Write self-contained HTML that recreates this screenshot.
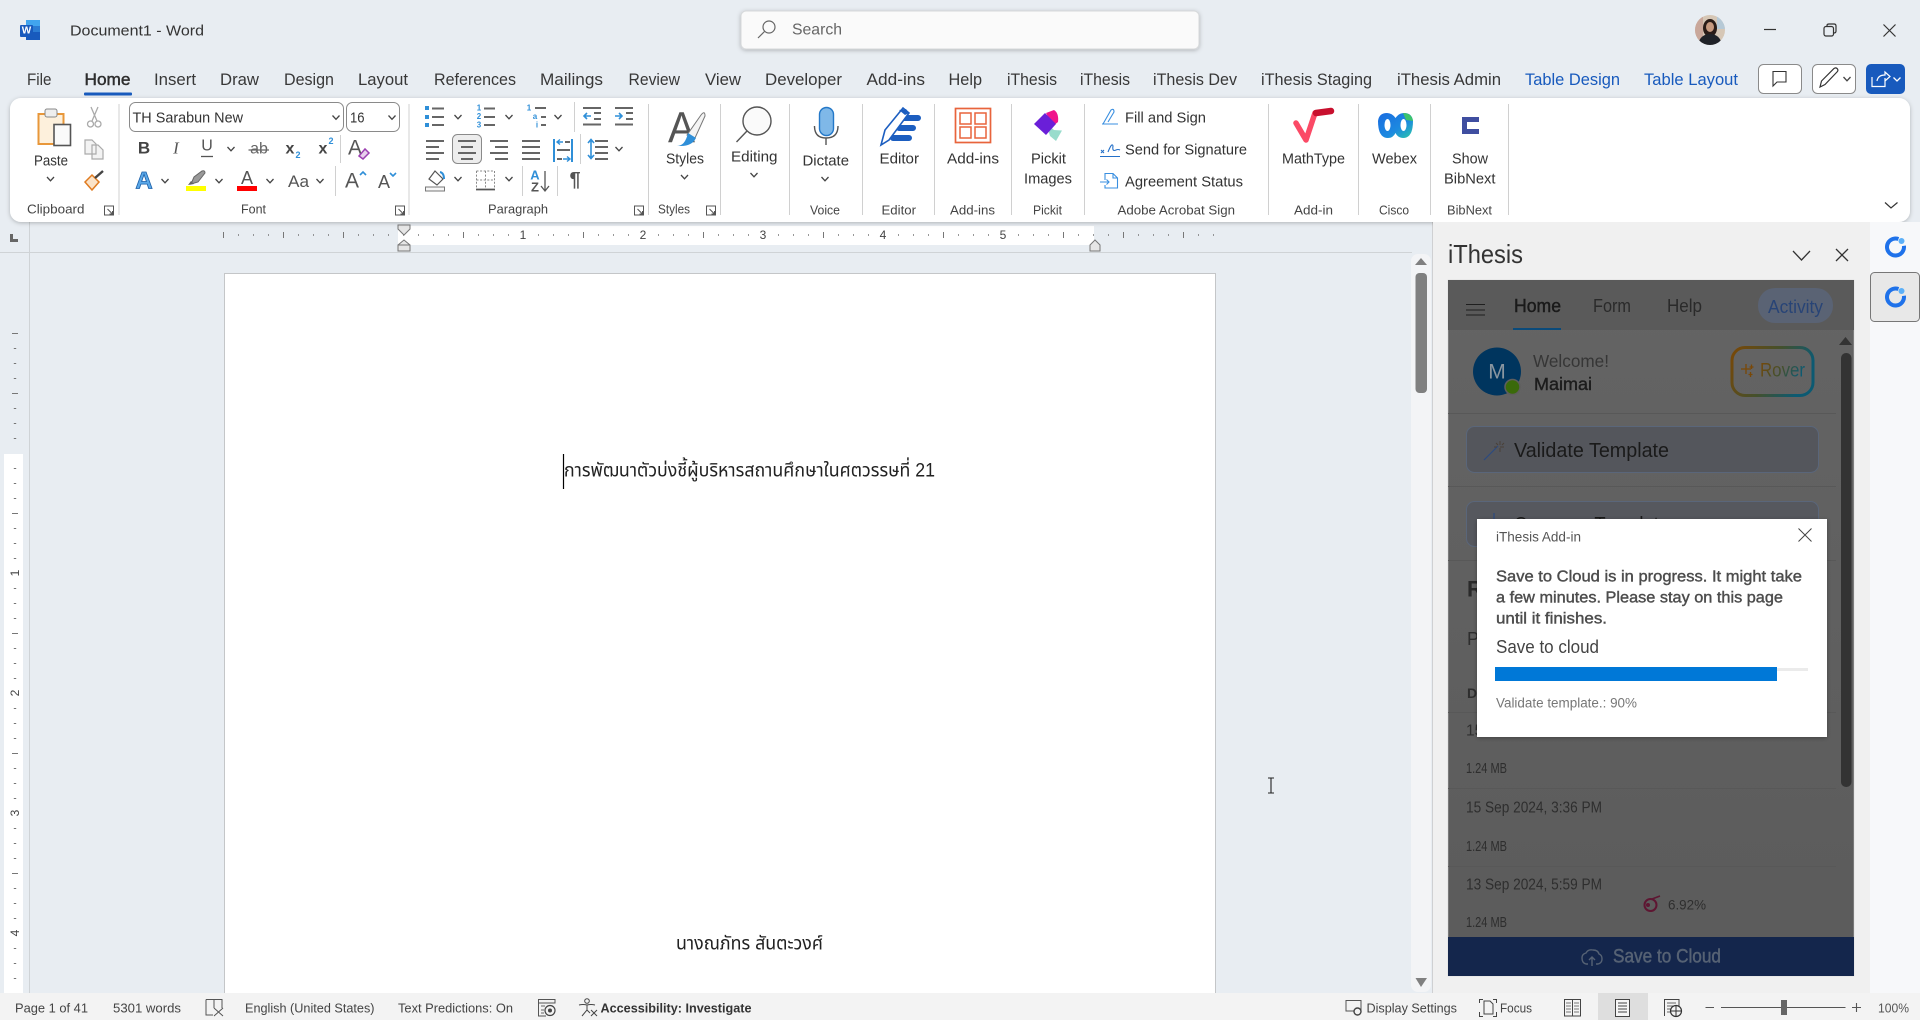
<!DOCTYPE html>
<html lang="en"><head><meta charset="utf-8"><title>Document1 - Word</title>
<style>
html,body{margin:0;padding:0;width:1920px;height:1020px;overflow:hidden;background:#e8edf2}
svg{display:block}
text{font-family:"Liberation Sans","Noto Sans CJK JP",sans-serif;dominant-baseline:central;fill:#333}
.tab{font-size:16.5px;fill:#383838}
.rb{font-size:15px;fill:#333}
.lb{font-size:13px;fill:#444}
.sb{font-size:13px;fill:#444}
.ln{fill:none;stroke:#666;stroke-width:2}
.bl{fill:none;stroke:#2f8fd8;stroke-width:2}
.sep{stroke:#d0d0d0;stroke-width:1}
.ic{fill:none;stroke:#666;stroke-width:1.3}
.dk{font-size:15.5px;fill:#2e2e2e}
.sm{font-size:14.5px;fill:#2e2e2e}
.pl{stroke:#585858;stroke-width:1}
.pop{font-size:15.5px;fill:#4c4c4c;stroke:#4c4c4c;stroke-width:.4}
</style></head><body>
<svg width="1920" height="1020" viewBox="0 0 1920 1020" xmlns="http://www.w3.org/2000/svg">
<defs>
<g id="ch"><path d="M-3.5 -2L0 1.8L3.5 -2" fill="none" stroke="#444" stroke-width="1.3"/></g>
<g id="lc"><path d="M0 0H9V9H0Z M3 3L8 8M8 5V8H5" fill="none" stroke="#555" stroke-width="1"/></g>
<g id="sw"><circle r="8.5" fill="none" stroke="#1f72ea" stroke-width="4" stroke-dasharray="44 9.4" transform="rotate(-8)"/><circle cx="6" cy="-6" r="3" fill="#5cb0f8"/></g>
<filter id="sh" x="-2%" y="-10%" width="104%" height="125%"><feDropShadow dx="0" dy="1" stdDeviation="2" flood-color="#000" flood-opacity=".25"/></filter>
<filter id="sh2" x="-5%" y="-5%" width="110%" height="110%"><feDropShadow dx="0" dy="1" stdDeviation="2" flood-color="#000" flood-opacity=".3"/></filter>
<linearGradient id="rov" x1="0" x2="1" y1="0" y2="0.3"><stop offset="0" stop-color="#7a4806"/><stop offset=".55" stop-color="#44502c"/><stop offset="1" stop-color="#0c5a72"/></linearGradient>
<linearGradient id="wbx" x1="0" x2="1" y1="0" y2="1"><stop offset="0" stop-color="#1a6be0"/><stop offset=".6" stop-color="#1c8ae0"/><stop offset="1" stop-color="#2cc8a8"/></linearGradient>
<linearGradient id="pb" x1="0" x2="0" y1="0" y2="1"><stop offset="0" stop-color="#646464"/><stop offset="1" stop-color="#5b5b5b"/></linearGradient>
<clipPath id="av"><circle cx="1710" cy="30" r="15"/></clipPath>
</defs>

<rect width="1920" height="1020" fill="#e8edf2"/>

<!-- Title bar -->
<rect x="26" y="20" width="14" height="20" rx="1.5" fill="#2b7cd3"/><rect x="26" y="20" width="14" height="6" fill="#41a5ee"/><rect x="26" y="32" width="14" height="8" fill="#185abd"/><rect x="20" y="25" width="13" height="12" rx="1" fill="#185abd"/>
<text x="26.5" y="31" style="font-size:10px;font-weight:bold;fill:#fff;text-anchor:middle">W</text>
<text x="70" y="31" textLength="134" lengthAdjust="spacingAndGlyphs" style="font-size:15px;fill:#333">Document1  -  Word</text>
<rect x="741" y="11" width="458" height="38" rx="5" fill="#fafafa" stroke="#d6d8da" filter="url(#sh)"/>
<circle cx="769" cy="27" r="6" fill="none" stroke="#666" stroke-width="1.2"/><path d="M764.5 31.5L758 38" stroke="#666" stroke-width="1.2"/>
<text x="792" y="30" textLength="50" lengthAdjust="spacingAndGlyphs" style="font-size:16px;fill:#666">Search</text>
<g clip-path="url(#av)"><rect x="1695" y="15" width="30" height="30" fill="#d6c7b6"/><rect x="1695" y="15" width="8" height="30" fill="#c9a79a"/><rect x="1717" y="15" width="8" height="14" fill="#b6c9d6"/><ellipse cx="1710" cy="28" rx="7" ry="9" fill="#2a1c18"/><ellipse cx="1710" cy="27" rx="4" ry="5" fill="#c79a80"/><ellipse cx="1710" cy="43" rx="11" ry="9" fill="#1f2228"/></g>
<path d="M1764 29.5H1776" stroke="#333" stroke-width="1.2"/>
<rect x="1824" y="26.5" width="9.5" height="9.5" rx="2" fill="none" stroke="#333" stroke-width="1.2"/><path d="M1827 26V25.5Q1827 24 1829 24H1834Q1836 24 1836 26V31Q1836 33 1834 33" fill="none" stroke="#333" stroke-width="1.2"/>
<path d="M1883.5 24.5L1895.5 36.5M1895.5 24.5L1883.5 36.5" stroke="#333" stroke-width="1.2"/>

<!-- Tabs -->
<text class="tab" x="27" y="80" textLength="24.5" lengthAdjust="spacingAndGlyphs">File</text>
<text class="tab" x="84.5" y="80" textLength="46" lengthAdjust="spacingAndGlyphs" style="fill:#2e2e2e;stroke:#2e2e2e;stroke-width:.45">Home</text>
<rect x="84" y="92.5" width="48" height="3" rx="1" fill="#185abd"/>
<text class="tab" x="154" y="80" textLength="42" lengthAdjust="spacingAndGlyphs">Insert</text>
<text class="tab" x="220" y="80" textLength="39" lengthAdjust="spacingAndGlyphs">Draw</text>
<text class="tab" x="284" y="80" textLength="50" lengthAdjust="spacingAndGlyphs">Design</text>
<text class="tab" x="358" y="80" textLength="50" lengthAdjust="spacingAndGlyphs">Layout</text>
<text class="tab" x="434" y="80" textLength="82" lengthAdjust="spacingAndGlyphs">References</text>
<text class="tab" x="540" y="80" textLength="63" lengthAdjust="spacingAndGlyphs">Mailings</text>
<text class="tab" x="628.5" y="80" textLength="51.5" lengthAdjust="spacingAndGlyphs">Review</text>
<text class="tab" x="705" y="80" textLength="36" lengthAdjust="spacingAndGlyphs">View</text>
<text class="tab" x="765" y="80" textLength="77" lengthAdjust="spacingAndGlyphs">Developer</text>
<text class="tab" x="866.5" y="80" textLength="58.5" lengthAdjust="spacingAndGlyphs">Add-ins</text>
<text class="tab" x="948.5" y="80" textLength="33.5" lengthAdjust="spacingAndGlyphs">Help</text>
<text class="tab" x="1007" y="80" textLength="50" lengthAdjust="spacingAndGlyphs">iThesis</text>
<text class="tab" x="1080" y="80" textLength="50" lengthAdjust="spacingAndGlyphs">iThesis</text>
<text class="tab" x="1153" y="80" textLength="84" lengthAdjust="spacingAndGlyphs">iThesis Dev</text>
<text class="tab" x="1261" y="80" textLength="111" lengthAdjust="spacingAndGlyphs">iThesis Staging</text>
<text class="tab" x="1397" y="80" textLength="104" lengthAdjust="spacingAndGlyphs">iThesis Admin</text>
<text class="tab" x="1525" y="80" textLength="95" lengthAdjust="spacingAndGlyphs" style="fill:#185abd">Table Design</text>
<text class="tab" x="1644" y="80" textLength="94" lengthAdjust="spacingAndGlyphs" style="fill:#185abd">Table Layout</text>
<rect x="1758.5" y="64.5" width="43" height="29" rx="5" fill="#fff" stroke="#8a8a8a"/>
<path d="M1773 72.5H1786V83H1777L1773 87V83Z" fill="none" stroke="#333" stroke-width="1.1" transform="translate(0,-1)"/>
<rect x="1812.5" y="64.5" width="43" height="29" rx="5" fill="#fff" stroke="#8a8a8a"/>
<path d="M1820 87L1821.5 81L1834 68.5Q1836 67 1837.5 69Q1838.5 70.5 1837 72L1825 84.5Z" fill="none" stroke="#333" stroke-width="1.2"/>
<use href="#ch" x="1847" y="79"/>
<rect x="1866" y="64" width="39" height="30" rx="5" fill="#185abd"/>
<path d="M1872 77V86.5H1885V81M1877 81Q1878 75 1885 75V72L1890 76.5L1885 81V78" fill="none" stroke="#fff" stroke-width="1.2"/>
<path d="M1893.5 77.5L1897 81L1900.5 77.5" fill="none" stroke="#fff" stroke-width="1.3"/>

<!-- Doc area -->
<rect x="0" y="222" width="1433" height="771" fill="#e8edf2"/>
<rect x="398" y="226" width="696" height="19" fill="#fff"/>
<path d="M0 252.5H1412" stroke="#cfd3d6"/><path d="M29.5 222V993" stroke="#cfd3d6"/>
<path d="M10 234V242H18V239H13V234Z" fill="#666"/>
<rect x="4" y="454" width="19" height="539" fill="#fff"/>
<rect x="224.5" y="273.5" width="991" height="740" fill="#fff" stroke="#c4c6c8"/>

<!-- H ruler -->
<path d="M223 235H1216" stroke="#777" stroke-width="1.6" stroke-dasharray="1 14" fill="none"/>
<path d="M223.5 232V238M283.5 232V238M343.5 232V238M463.5 232V238M583.5 232V238M703.5 232V238M823.5 232V238M943.5 232V238M1063.5 232V238M1123.5 232V238M1183.5 232V238" stroke="#777"/>
<rect x="517" y="227" width="12" height="17" fill="#fff"/><rect x="637" y="227" width="12" height="17" fill="#fff"/><rect x="757" y="227" width="12" height="17" fill="#fff"/><rect x="877" y="227" width="12" height="17" fill="#fff"/><rect x="997" y="227" width="12" height="17" fill="#fff"/>
<text x="523" y="235" style="font-size:12px;fill:#444;text-anchor:middle">1</text>
<text x="643" y="235" style="font-size:12px;fill:#444;text-anchor:middle">2</text>
<text x="763" y="235" style="font-size:12px;fill:#444;text-anchor:middle">3</text>
<text x="883" y="235" style="font-size:12px;fill:#444;text-anchor:middle">4</text>
<text x="1003" y="235" style="font-size:12px;fill:#444;text-anchor:middle">5</text>
<path d="M398 225H410V229L404 235L398 229Z M398 251H410V245L404 240L398 245Z" fill="#e6e6e6" stroke="#777" stroke-width="1"/><rect x="398" y="245" width="12" height="6" fill="#e6e6e6" stroke="#777"/>
<path d="M1090 245L1095 240L1100 245V251H1090Z" fill="#e6e6e6" stroke="#777"/>
<!-- V ruler -->
<path d="M15 348V442M15 468V990" stroke="#777" stroke-width="2.4" stroke-dasharray="1 14" fill="none"/>
<path d="M12 333.5H18M12 393.5H18M12 513.5H18M12 633.5H18M12 753.5H18M12 873.5H18" stroke="#777"/>
<rect x="6" y="567" width="16" height="12" fill="#fff"/><rect x="6" y="687" width="16" height="12" fill="#fff"/><rect x="6" y="807" width="16" height="12" fill="#fff"/><rect x="6" y="927" width="16" height="12" fill="#fff"/>
<text transform="translate(15,573) rotate(-90)" style="font-size:12px;fill:#444;text-anchor:middle">1</text>
<text transform="translate(15,693) rotate(-90)" style="font-size:12px;fill:#444;text-anchor:middle">2</text>
<text transform="translate(15,813) rotate(-90)" style="font-size:12px;fill:#444;text-anchor:middle">3</text>
<text transform="translate(15,933) rotate(-90)" style="font-size:12px;fill:#444;text-anchor:middle">4</text>
<!-- Doc text -->
<path d="M563.5 454V489" stroke="#000" stroke-width="1.2"/>
<text x="564" y="471" textLength="371" lengthAdjust="spacingAndGlyphs" style="font-size:19px;fill:#222;font-family:'Liberation Sans','Noto Sans Thai','Noto Sans CJK SC',sans-serif">การพัฒนาตัวบ่งชี้ผู้บริหารสถานศึกษาในศตวรรษที่ 21</text>
<text x="676" y="944" textLength="147" lengthAdjust="spacingAndGlyphs" style="font-size:19px;fill:#222;font-family:'Liberation Sans','Noto Sans Thai','Noto Sans CJK SC',sans-serif">นางณภัทร สันตะวงศ์</text>
<path d="M1268 778H1274M1268 793H1274M1271 778V793" stroke="#222" stroke-width="1.1"/>
<!-- doc scrollbar -->
<rect x="1411" y="254" width="20" height="738" rx="7" fill="#f3f4f6"/>
<path d="M1432.5 222V993" stroke="#cfd0d2"/>
<rect x="1415.5" y="273" width="11.5" height="120" rx="4" fill="#808080"/>
<path d="M1421 258L1427 265H1415Z" fill="#808080"/><path d="M1415.5 978H1427L1421 987Z" fill="#808080"/>

<!-- Ribbon -->
<rect x="10" y="98" width="1900" height="124" rx="11" fill="#fff" filter="url(#sh)"/>
<!-- Clipboard -->
<rect x="38.5" y="114" width="25" height="30" fill="#fdf0dc" stroke="#e8973a" stroke-width="2"/><rect x="45" y="109" width="12" height="8" rx="2" fill="#eee" stroke="#888"/>
<rect x="54" y="124.5" width="16.5" height="21" fill="#fafafa" stroke="#555" stroke-width="1.6"/>
<text class="rb" x="34" y="161" textLength="34" lengthAdjust="spacingAndGlyphs">Paste</text>
<use href="#ch" x="50.5" y="179"/>
<path d="M91 107L97 121M98 107L92 121" stroke="#aaa" stroke-width="1.3"/><circle cx="90.5" cy="124" r="3" fill="none" stroke="#aaa" stroke-width="1.3"/><circle cx="98" cy="124" r="3" fill="none" stroke="#aaa" stroke-width="1.3"/>
<path d="M85 140H92L96 144V154H85Z M92 145H98L103 150V159H92Z" fill="#f3f3f3" stroke="#aaa" stroke-width="1.2"/>
<path d="M85 182L92 175L99 182L92 190Z" fill="#fbe3c8" stroke="#e07b20" stroke-width="1.5"/><path d="M95 178L103 171" stroke="#444" stroke-width="2.4"/>
<text class="lb" x="27" y="209" textLength="57.5" lengthAdjust="spacingAndGlyphs">Clipboard</text>
<use href="#lc" x="104.5" y="206"/>
<path class="sep" d="M119 104V215"/>
<!-- Font -->
<rect x="129.5" y="102.5" width="214" height="29" rx="6" fill="#fff" stroke="#8a8a8a"/>
<text x="132.5" y="118" textLength="110.5" lengthAdjust="spacingAndGlyphs" style="font-size:15px;fill:#333">TH Sarabun New</text>
<use href="#ch" x="336" y="117.5"/>
<rect x="346.5" y="102.5" width="53" height="29" rx="6" fill="#fff" stroke="#8a8a8a"/>
<text x="350" y="118" textLength="14.5" lengthAdjust="spacingAndGlyphs" style="font-size:15px;fill:#333">16</text>
<use href="#ch" x="392" y="117.5"/>
<text x="144" y="148" style="font-size:17px;font-weight:bold;fill:#444;text-anchor:middle">B</text>
<text x="176" y="148" style="font-size:17px;font-style:italic;font-family:'Liberation Serif',serif;fill:#555;text-anchor:middle">I</text>
<text x="207" y="146" style="font-size:16px;fill:#555;text-anchor:middle">U</text><path d="M201 156.5H213" stroke="#555" stroke-width="1.3"/>
<use href="#ch" x="231" y="149"/>
<text x="259" y="149" style="font-size:16px;fill:#666;text-anchor:middle">ab</text><path d="M248.5 150H269" stroke="#666" stroke-width="1.2"/>
<text x="290" y="149" style="font-size:16px;font-weight:bold;fill:#444;text-anchor:middle">x</text><text x="298" y="155" style="font-size:9px;font-weight:bold;fill:#2f8fd8;text-anchor:middle">2</text>
<text x="323" y="149" style="font-size:16px;font-weight:bold;fill:#444;text-anchor:middle">x</text><text x="331" y="141" style="font-size:9px;font-weight:bold;fill:#2f8fd8;text-anchor:middle">2</text>
<path class="sep" d="M340.5 135V163"/>
<text x="355" y="148" style="font-size:21px;fill:#555;text-anchor:middle">A</text>
<path d="M359 156L365 149L369 153L363 159Z" fill="#e8d0ec" stroke="#9b3fb0" stroke-width="1.5"/>
<text x="144" y="181" style="font-size:24px;font-weight:bold;fill:#5aa8e8;stroke:#1a5ea8;stroke-width:.8;text-anchor:middle">A</text>
<use href="#ch" x="165" y="181"/>
<path d="M191 184L194 177L202 171Q205 170 205 173L198 182Z" fill="#999" stroke="#666"/><path d="M188 185L191 181L194 184Z" fill="#666"/>
<rect x="186" y="186" width="20" height="5" fill="#ffff00"/>
<use href="#ch" x="219" y="181"/>
<text x="247" y="178" style="font-size:18px;fill:#555;text-anchor:middle">A</text>
<rect x="237" y="186" width="20" height="5" fill="#ff0000"/>
<use href="#ch" x="270" y="181"/>
<text x="298.5" y="181.5" textLength="21" lengthAdjust="spacingAndGlyphs" style="font-size:17px;fill:#555;text-anchor:middle">Aa</text>
<use href="#ch" x="320" y="181"/>
<path class="sep" d="M335.5 166V196"/>
<text x="352" y="181" style="font-size:21px;fill:#555;text-anchor:middle">A</text><path d="M360 175L363 172L366 175" fill="none" stroke="#2f8fd8" stroke-width="1.6"/>
<text x="384" y="182" style="font-size:18px;fill:#555;text-anchor:middle">A</text><path d="M390 173L393 176L396 173" fill="none" stroke="#2f8fd8" stroke-width="1.6"/>
<text class="lb" x="241" y="209" textLength="25" lengthAdjust="spacingAndGlyphs">Font</text>
<use href="#lc" x="395.5" y="206"/>
<path class="sep" d="M409 104V215"/>
<!-- Paragraph -->
<path class="ln" d="M432 108.5H444M432 117H444M432 125H444"/><rect x="425" y="106" width="4" height="4" fill="#2f8fd8"/><rect x="425" y="115" width="4" height="4" fill="#2f8fd8"/><rect x="425" y="123" width="4" height="4" fill="#2f8fd8"/>
<use href="#ch" x="458" y="117"/>
<text x="479" y="108" style="font-size:8px;font-weight:bold;fill:#2f8fd8;text-anchor:middle">1</text><text x="479" y="116.5" style="font-size:8px;font-weight:bold;fill:#2f8fd8;text-anchor:middle">2</text><text x="479" y="125" style="font-size:8px;font-weight:bold;fill:#2f8fd8;text-anchor:middle">3</text>
<path class="ln" d="M484 108.5H495M484 117H495M484 125H495"/>
<use href="#ch" x="509" y="117"/>
<text x="529" y="108" style="font-size:8px;font-weight:bold;fill:#2f8fd8;text-anchor:middle">1</text><text x="535" y="116.5" style="font-size:8px;font-weight:bold;fill:#2f8fd8;text-anchor:middle">a</text><text x="537" y="125" style="font-size:8px;font-weight:bold;fill:#2f8fd8;text-anchor:middle">i</text>
<path class="ln" d="M535 108H546M541 117H546M541 125H546"/>
<use href="#ch" x="558" y="117"/>
<path class="sep" d="M574.5 102V132"/>
<path class="ln" d="M583 108H601M594 113H601M594 119H601M583 124.5H601"/><path d="M591 116H584M587 113L584 116L587 119" fill="none" stroke="#2f8fd8" stroke-width="1.6"/>
<path class="ln" d="M615 108H633M626 113H633M626 119H633M615 124.5H633"/><path d="M615 116H622M619 113L622 116L619 119" fill="none" stroke="#2f8fd8" stroke-width="1.6"/>
<path class="ln" d="M426 141H444M426 147H439M426 153H444M426 159H439"/>
<rect x="452.5" y="134.5" width="29" height="29" rx="5" fill="#ededed" stroke="#8a8a8a"/>
<path class="ln" d="M458 141H476M461 147H473M458 153H476M461 159H473"/>
<path class="ln" d="M490 141H508M495 147H508M490 153H508M495 159H508"/>
<path class="ln" d="M522 141H540M522 147H540M522 153H540M522 159H540"/>
<path class="bl" d="M554 139V162M572 139V162" stroke-width="1.5"/><path class="ln" d="M565 142H570M557 150H570M557 159H562" stroke-width="1.6"/><path d="M563 142H557M560 139.5L557 142L560 144.5M563 159H570M567 156.5L570 159L567 161.5" fill="none" stroke="#2f8fd8" stroke-width="1.4"/>
<path class="sep" d="M580.5 134V164"/>
<path class="ln" d="M595 141H608M595 147H608M595 153H608M595 159H608"/><path d="M591 140V158M588 143L591 139.5L594 143M588 155L591 158.5L594 155" fill="none" stroke="#2f8fd8" stroke-width="1.6"/>
<use href="#ch" x="619" y="149"/>
<path d="M429 179L435 171L443 179L437 185Z" fill="#fff" stroke="#555" stroke-width="1.2"/><path d="M440 172Q444 173 444 179" fill="none" stroke="#2f8fd8" stroke-width="2"/>
<rect x="425.5" y="187" width="19" height="4" fill="#f6f6f6" stroke="#777"/>
<use href="#ch" x="458" y="179"/>
<path d="M476.5 171H494.5V189M476.5 171V189M485.5 171V189M476.5 180H494.5" fill="none" stroke="#888" stroke-dasharray="2 1.6"/><path d="M476 189.5H495" stroke="#555" stroke-width="1.8"/>
<use href="#ch" x="509" y="179"/>
<path class="sep" d="M522.5 166V196"/>
<text x="535" y="175" style="font-size:13px;font-weight:bold;fill:#2f8fd8;text-anchor:middle">A</text><text x="535" y="187" style="font-size:13px;font-weight:bold;fill:#555;text-anchor:middle">Z</text>
<path d="M545 171V190M541 186L545 191L549 186" fill="none" stroke="#555" stroke-width="1.3"/>
<path class="sep" d="M557.5 166V196"/>
<text x="575" y="180" style="font-size:20px;font-weight:bold;fill:#555;text-anchor:middle">¶</text>
<text class="lb" x="488" y="209" textLength="60" lengthAdjust="spacingAndGlyphs">Paragraph</text>
<use href="#lc" x="634.5" y="206"/>
<path class="sep" d="M648.5 104V215"/>
<!-- Styles -->
<text x="668" y="128" textLength="27" lengthAdjust="spacingAndGlyphs" style="font-size:44px;fill:#555">A</text>
<path d="M687 135L701 115Q705 110 705 116L695 138Z" fill="#f4f4f4" stroke="#777"/><path d="M677 146Q685 146 688 133L696 138Q692 146 681 146Z" fill="#2f8fd8"/>
<text class="rb" x="666" y="159" textLength="38" lengthAdjust="spacingAndGlyphs">Styles</text>
<use href="#ch" x="684.5" y="177"/>
<text class="lb" x="658" y="209" textLength="32" lengthAdjust="spacingAndGlyphs">Styles</text>
<use href="#lc" x="706.5" y="206"/>
<path class="sep" d="M720.5 104V215"/>
<!-- Editing -->
<circle cx="757" cy="121" r="14" fill="#fafafa" stroke="#555" stroke-width="1.4"/><path d="M747 131L736.5 142" stroke="#555" stroke-width="1.4"/>
<text class="rb" x="731" y="157" textLength="46.5" lengthAdjust="spacingAndGlyphs">Editing</text>
<use href="#ch" x="754" y="175"/>
<path class="sep" d="M789.5 104V215"/>
<!-- Dictate -->
<rect x="819.5" y="107.5" width="14" height="28" rx="7" fill="#7fb8e8" stroke="#2478c8" stroke-width="1.4"/>
<path d="M814.5 126Q814.5 138 826 138Q838 138 838 126M826 138V145" fill="none" stroke="#555" stroke-width="1.4"/>
<text class="rb" x="802.5" y="161" textLength="46.5" lengthAdjust="spacingAndGlyphs">Dictate</text>
<use href="#ch" x="825" y="179"/>
<text class="lb" x="810" y="210" textLength="30" lengthAdjust="spacingAndGlyphs">Voice</text>
<path class="sep" d="M862.5 104V215"/>
<!-- Editor -->
<path d="M904 118H918M899 128H913M893 138H909" stroke="#1c5ec0" stroke-width="6" stroke-linecap="round" fill="none"/>
<path d="M881 145L885 130L903 108L909 113L889 140Z" fill="#fff" stroke="#1c5ec0" stroke-width="1.6"/>
<path d="M899 110L906 109L909 113L905 115Z" fill="#1c5ec0"/>
<text class="rb" x="879.5" y="159" textLength="39.5" lengthAdjust="spacingAndGlyphs">Editor</text>
<text class="lb" x="881.5" y="210" textLength="34.5" lengthAdjust="spacingAndGlyphs">Editor</text>
<path class="sep" d="M934.5 104V215"/>
<!-- Add-ins -->
<rect x="955.5" y="108.5" width="35" height="34" fill="#fff" stroke="#e8643c" stroke-width="1.7"/>
<rect x="960" y="113" width="11" height="11" fill="#fff" stroke="#e8643c" stroke-width="1.5"/><rect x="975" y="113" width="11" height="11" fill="#fff" stroke="#e8643c" stroke-width="1.5"/><rect x="960" y="127" width="11" height="11" fill="#fff" stroke="#e8643c" stroke-width="1.5"/><rect x="975" y="127" width="11" height="11" fill="#fff" stroke="#e8643c" stroke-width="1.5"/>
<text class="rb" x="947" y="159" textLength="52" lengthAdjust="spacingAndGlyphs">Add-ins</text>
<text class="lb" x="950" y="210" textLength="45" lengthAdjust="spacingAndGlyphs">Add-ins</text>
<path class="sep" d="M1011.5 104V215"/>
<!-- Pickit -->
<path d="M1046 123L1054 130L1062 130.5L1056 141L1050 136Z" fill="#98dccc"/>
<path d="M1046 113L1054 110Q1059 113 1058 122L1053 126Z" fill="#f0148c"/>
<path d="M1045 113L1056 124L1046 135L1034 124Z" fill="#6a1fd8"/>
<text class="rb" x="1031" y="159" textLength="35" lengthAdjust="spacingAndGlyphs">Pickit</text>
<text class="rb" x="1024" y="179" textLength="48" lengthAdjust="spacingAndGlyphs">Images</text>
<text class="lb" x="1033" y="210" textLength="29" lengthAdjust="spacingAndGlyphs">Pickit</text>
<path class="sep" d="M1084.5 104V215"/>
<!-- Adobe -->
<path d="M1103 124L1111 110Q1114 108 1114 112L1108 122M1102 124H1118" fill="none" stroke="#3a8fe0" stroke-width="1.1"/>
<text class="rb" x="1125" y="118" textLength="81" lengthAdjust="spacingAndGlyphs">Fill and Sign</text>
<path d="M1108 152Q1112 142 1113 146Q1112 152 1116 150Q1118 149 1120 150M1100 156.5H1120M1101 150L1104 153M1104 150L1101 153" fill="none" stroke="#2470c8" stroke-width="1.1"/>
<text class="rb" x="1125" y="150" textLength="122" lengthAdjust="spacingAndGlyphs">Send for Signature</text>
<path d="M1105 180V173.5H1113L1117.5 178V188H1105V185M1113 173.5V178H1117.5M1100 182H1109M1106.5 179.5L1109 182L1106.5 184.5" fill="none" stroke="#3a8fe0" stroke-width="1.1"/>
<text class="rb" x="1125" y="182" textLength="118" lengthAdjust="spacingAndGlyphs">Agreement Status</text>
<text class="lb" x="1117.5" y="210" textLength="117.5" lengthAdjust="spacingAndGlyphs">Adobe Acrobat Sign</text>
<path class="sep" d="M1268.5 104V215"/>
<!-- MathType -->
<path d="M1296 123L1306 140L1315 113" fill="none" stroke="#fb4a66" stroke-width="5.5" stroke-linecap="round" stroke-linejoin="round"/>
<path d="M1316 113L1331 111" stroke="#c8102e" stroke-width="6.5" stroke-linecap="round"/>
<text class="rb" x="1282" y="159" textLength="63" lengthAdjust="spacingAndGlyphs">MathType</text>
<text class="lb" x="1294" y="210" textLength="39" lengthAdjust="spacingAndGlyphs">Add-in</text>
<path class="sep" d="M1358.5 104V215"/>
<!-- Webex -->
<path d="M1378 121Q1379 113 1387 113Q1392 113 1395.5 118Q1399 113 1404 113Q1412 113 1413 121Q1413 138 1403 138Q1398 138 1395.5 133Q1393 138 1388 138Q1378 138 1378 121Z" fill="url(#wbx)"/>
<path d="M1403 113Q1412 113 1413 121L1406 120Z" fill="#3cc46c"/>
<ellipse cx="1387.5" cy="125" rx="3" ry="6" fill="#fff"/><ellipse cx="1403.5" cy="125" rx="3" ry="6" fill="#fff"/>
<text class="rb" x="1372" y="159" textLength="45" lengthAdjust="spacingAndGlyphs">Webex</text>
<text class="lb" x="1379" y="210" textLength="30" lengthAdjust="spacingAndGlyphs">Cisco</text>
<path class="sep" d="M1430.5 104V215"/>
<!-- BibNext -->
<path d="M1462 117H1479V122H1467V129H1479V134H1462Z" fill="#3f4ea0"/>
<text class="rb" x="1452" y="159" textLength="36" lengthAdjust="spacingAndGlyphs">Show</text>
<text class="rb" x="1444" y="179" textLength="51.5" lengthAdjust="spacingAndGlyphs">BibNext</text>
<text class="lb" x="1447" y="210" textLength="45" lengthAdjust="spacingAndGlyphs">BibNext</text>
<path class="sep" d="M1508.5 104V215"/>
<path d="M1885 202.5L1891 208L1897.5 202.5" fill="none" stroke="#333" stroke-width="1.2"/>

<!-- Side panel -->
<rect x="1433" y="222" width="437" height="771" fill="#f0f0f0"/>
<rect x="1870" y="222" width="50" height="771" fill="#f7f8fa"/>
<text x="1448" y="254" textLength="75" lengthAdjust="spacingAndGlyphs" style="font-size:26px;fill:#333">iThesis</text>
<path d="M1793 251L1801.5 260L1810 251" fill="none" stroke="#333" stroke-width="1.3"/>
<path d="M1836 249L1848 261M1848 249L1836 261" stroke="#333" stroke-width="1.3"/>
<use href="#sw" x="1895.5" y="247"/>
<rect x="1870.5" y="272.5" width="49" height="49" rx="4" fill="#e8e8e8" stroke="#777"/>
<use href="#sw" x="1895.5" y="297"/>

<!-- pane -->
<rect x="1448" y="280" width="406" height="696" fill="url(#pb)" stroke="#d0d0d0" stroke-width=".5"/>
<rect x="1448" y="280" width="406" height="50" fill="#5a5a5a"/>
<path d="M1466 304.5H1485M1466 310H1485M1466 315H1485" stroke="#1f1f1f" stroke-width="1"/>
<text x="1514" y="306" textLength="47" lengthAdjust="spacingAndGlyphs" style="font-size:18px;fill:#1a1a1a;stroke:#1a1a1a;stroke-width:.45">Home</text>
<rect x="1513" y="328" width="48" height="2" fill="#0a4a7a"/>
<text x="1593" y="306" textLength="38" lengthAdjust="spacingAndGlyphs" style="font-size:18px;fill:#2a2a2a">Form</text>
<text x="1667" y="306" textLength="35" lengthAdjust="spacingAndGlyphs" style="font-size:18px;fill:#2a2a2a">Help</text>
<rect x="1758" y="288" width="75" height="35" rx="17" fill="#5a6374"/>
<text x="1768" y="307" textLength="55" lengthAdjust="spacingAndGlyphs" style="font-size:18px;fill:#284476">Activity</text>

<circle cx="1497" cy="371.5" r="24" fill="#00355e"/>
<text x="1497" y="372" style="font-size:21px;fill:#8a96a0;text-anchor:middle">M</text>
<circle cx="1512.5" cy="387" r="7.5" fill="#3a6a0a" stroke="#5e5e5e" stroke-width="1.5"/>
<text x="1533" y="361" textLength="76" lengthAdjust="spacingAndGlyphs" style="font-size:17.5px;fill:#363636">Welcome!</text>
<text x="1534" y="384" textLength="58" lengthAdjust="spacingAndGlyphs" style="font-size:17.5px;fill:#1c1c1c;stroke:#1c1c1c;stroke-width:.4">Maimai</text>
<rect x="1732" y="347.5" width="81" height="48" rx="13" fill="none" stroke="url(#rov)" stroke-width="3"/>
<path d="M1746 364V374M1741 369H1751M1751.5 364.5V369M1749.5 367H1753.5M1750.5 372V377M1748.5 374.5H1752.5" stroke="#7a4806" stroke-width="1.3" fill="none"/>
<text x="1760" y="371" textLength="45" lengthAdjust="spacingAndGlyphs" style="font-size:19px;fill:url(#rov)">Rover</text>
<path class="pl" d="M1448 413.5H1836M1448 486.5H1836M1448 560.5H1836M1448 712.5H1836M1448 788.5H1836M1448 866.5H1836"/>
<rect x="1466.5" y="426.5" width="352" height="46" rx="8" fill="#54565c" stroke="#5a667a"/>
<path d="M1484 460L1498 446" stroke="#2c4a80" stroke-width="1.2"/><path d="M1500 441V445M1500 448V452M1494 447H1497M1500 447H1504M1496 443L1498 445M1504 443L1502 445" stroke="#4a4038" stroke-width="1"/>
<text x="1514" y="451" textLength="155" lengthAdjust="spacingAndGlyphs" style="font-size:20px;fill:#1a1a1a">Validate Template</text>
<rect x="1466.5" y="501.5" width="352" height="45" rx="8" fill="#56585e" stroke="#5a667a"/>
<path d="M1494 513V525" stroke="#2c4a80" stroke-width="1.2"/>
<text x="1514" y="525" textLength="155" lengthAdjust="spacingAndGlyphs" style="font-size:20px;fill:#1a1a1a">Compare Template</text>
<text x="1467" y="589" style="font-size:22px;font-weight:bold;fill:#2a2a2a">R</text>
<text x="1467" y="639" style="font-size:18px;fill:#2e2e2e">P</text>
<text x="1467" y="693" style="font-size:14px;font-weight:bold;fill:#2e2e2e">D</text>
<text class="dk" x="1466" y="731">15</text>
<text class="sm" x="1466" y="769" textLength="41" lengthAdjust="spacingAndGlyphs">1.24 MB</text>
<text class="dk" x="1466" y="808" textLength="136" lengthAdjust="spacingAndGlyphs">15 Sep 2024, 3:36 PM</text>
<text class="sm" x="1466" y="847" textLength="41" lengthAdjust="spacingAndGlyphs">1.24 MB</text>
<text class="dk" x="1466" y="885" textLength="136" lengthAdjust="spacingAndGlyphs">13 Sep 2024, 5:59 PM</text>
<text class="sm" x="1466" y="923" textLength="41" lengthAdjust="spacingAndGlyphs">1.24 MB</text>
<circle cx="1650.5" cy="905" r="6" fill="none" stroke="#5e1632" stroke-width="2"/><circle cx="1648" cy="905" r="2" fill="#5e1632"/><path d="M1652 899L1660 896" stroke="#5e1632" stroke-width="1.5"/>
<text x="1668" y="904.5" textLength="38" lengthAdjust="spacingAndGlyphs" style="font-size:14px;fill:#2e2e2e">6.92%</text>
<path d="M1845.5 337L1852 345H1839Z" fill="#333"/>
<rect x="1841" y="353" width="10.5" height="434" rx="5" fill="#333"/>
<rect x="1448" y="937" width="406" height="39" fill="#14264c"/>
<path d="M1588 964H1586Q1582 963 1582 958Q1582 954 1586 953Q1588 949 1593 950Q1598 950 1599 954Q1602 955 1602 959Q1602 963 1598 964H1596M1592 966V957M1589 960L1592 957L1595 960" fill="none" stroke="#566274" stroke-width="1.4"/>
<text x="1613" y="957" textLength="108" lengthAdjust="spacingAndGlyphs" style="font-size:19px;fill:#566274;stroke:#566274;stroke-width:.45">Save to Cloud</text>

<!-- Popup -->
<rect x="1477" y="519" width="350" height="218" fill="#fff" filter="url(#sh2)"/>
<text x="1496" y="537" textLength="85" lengthAdjust="spacingAndGlyphs" style="font-size:13.5px;fill:#555">iThesis Add-in</text>
<path d="M1798.5 528.5L1811.5 541.5M1811.5 528.5L1798.5 541.5" stroke="#444" stroke-width="1"/>
<text class="pop" x="1496" y="577" textLength="306" lengthAdjust="spacingAndGlyphs">Save to Cloud is in progress. It might take</text>
<text class="pop" x="1496" y="598" textLength="287" lengthAdjust="spacingAndGlyphs">a few minutes. Please stay on this page</text>
<text class="pop" x="1496" y="619" textLength="111" lengthAdjust="spacingAndGlyphs">until it finishes.</text>
<text x="1496" y="647" textLength="103" lengthAdjust="spacingAndGlyphs" style="font-size:18px;fill:#444">Save to cloud</text>
<rect x="1495" y="668" width="313" height="3" fill="#ebebeb"/>
<rect x="1495" y="667" width="282" height="14" fill="#0078d7"/>
<text x="1496" y="703" textLength="141" lengthAdjust="spacingAndGlyphs" style="font-size:13.5px;fill:#777">Validate template.: 90%</text>

<!-- Status bar -->
<rect x="0" y="993" width="1920" height="27" fill="#f3f3f3"/>
<text class="sb" x="15" y="1008" textLength="73" lengthAdjust="spacingAndGlyphs">Page 1 of 41</text>
<text class="sb" x="113" y="1008" textLength="68" lengthAdjust="spacingAndGlyphs">5301 words</text>
<path d="M206 999.5H222V1008M206 999.5V1015H213M214 999.5V1008M214 1008L223 1016M223 1008L214 1016" fill="none" stroke="#555" stroke-width="1"/>
<text class="sb" x="245" y="1008" textLength="129.5" lengthAdjust="spacingAndGlyphs">English (United States)</text>
<text class="sb" x="398" y="1008" textLength="115" lengthAdjust="spacingAndGlyphs">Text Predictions: On</text>
<path d="M538.5 999.5H555V1003H538.5ZM538.5 1003V1016H546" fill="none" stroke="#555"/><circle cx="550" cy="1010.5" r="5" fill="none" stroke="#444" stroke-width="1.2"/><circle cx="550" cy="1010.5" r="2" fill="#444"/><path d="M541 1006H545M541 1010H544M541 1013H544" stroke="#666"/>
<circle cx="587" cy="1001" r="2.3" fill="none" stroke="#444"/><path d="M579 1005Q583 1004 587 1005Q591 1004 595 1005M587 1005V1010L582 1016M587 1010L590 1013M591 1010L597 1016M597 1010L591 1016" fill="none" stroke="#444" stroke-width="1"/>
<text class="sb" x="600.5" y="1008" textLength="151" lengthAdjust="spacingAndGlyphs" style="font-weight:bold;fill:#333">Accessibility: Investigate</text>
<rect x="1346" y="1000.5" width="15" height="10.5" fill="none" stroke="#555"/><circle cx="1357.5" cy="1011.5" r="3.5" fill="#f3f3f3" stroke="#444" stroke-width="1.4"/>
<text class="sb" x="1366.5" y="1008" textLength="90.5" lengthAdjust="spacingAndGlyphs">Display Settings</text>
<path d="M1479.5 1003V999.5H1483M1493 999.5H1496.5V1003M1479.5 1012V1016.5H1483M1493 1016.5H1496.5V1012" fill="none" stroke="#444"/><path d="M1484 1001H1490L1493 1004V1014H1484Z" fill="none" stroke="#444"/>
<text class="sb" x="1500" y="1008" textLength="32" lengthAdjust="spacingAndGlyphs">Focus</text>
<path d="M1564.5 999.5H1572.5V1016H1564.5ZM1572.5 999.5H1580.5V1016H1572.5Z" fill="none" stroke="#444"/><path d="M1566 1003H1571M1566 1006H1571M1566 1009H1571M1566 1012H1571M1574 1003H1579M1574 1006H1579M1574 1009H1579M1574 1012H1579" stroke="#777"/>
<rect x="1598" y="993" width="50" height="27" fill="#dedede"/>
<rect x="1615.5" y="999.5" width="14" height="17" fill="#f6f6f6" stroke="#444"/><path d="M1618 1003H1627M1618 1006H1627M1618 1009H1627M1618 1012H1627" stroke="#444"/>
<path d="M1664.5 1016V999.5H1679V1006" fill="none" stroke="#444"/><path d="M1667 1003H1676M1667 1006H1674M1667 1009H1671M1667 1012H1671" stroke="#666"/><circle cx="1676" cy="1011" r="5.5" fill="#f3f3f3" stroke="#333" stroke-width="1.2"/><path d="M1670.5 1011H1681.5M1676 1005.5V1016.5" stroke="#333"/>
<path d="M1705.5 1007.5H1714M1721 1007.5H1845.5M1852 1007.5H1861M1856.5 1003V1012" stroke="#555" stroke-width="1.1"/>
<rect x="1781" y="1000" width="6" height="15" fill="#666"/>
<text class="sb" x="1878" y="1008" textLength="31" lengthAdjust="spacingAndGlyphs" style="fill:#555">100%</text>
</svg>
</body></html>
